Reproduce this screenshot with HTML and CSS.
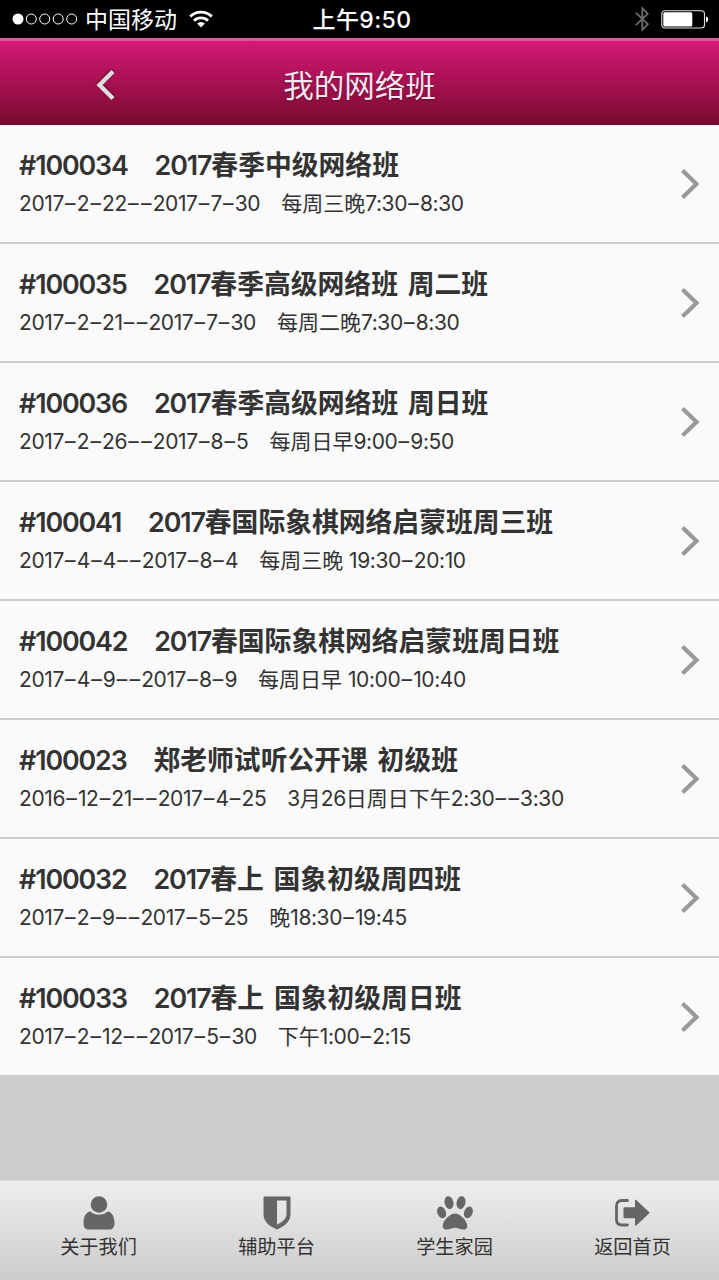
FILE: index.html
```html
<!DOCTYPE html>
<html lang="zh-CN">
<head>
    <meta charset="UTF-8">
    <meta name="viewport" content="width=device-width, initial-scale=1.0">
    <title>我的网络班</title>
    <link rel="stylesheet" href="styles.css">
</head>
<body>

    <div class="status-bar">
        <div class="status-left">
            <svg class="signal" viewBox="0 0 66 12">
                <circle cx="6" cy="6" r="5.5" fill="#fff"/>
                <g fill="none" stroke="#fff" stroke-width="1">
                    <circle cx="19.3" cy="6" r="5"/>
                    <circle cx="32.7" cy="6" r="5"/>
                    <circle cx="46.2" cy="6" r="5"/>
                    <circle cx="59.7" cy="6" r="5"/>
                </g>
            </svg>
            <span class="carrier">中国移动</span>
            <svg class="wifi" viewBox="0 0 24 18">
                <g fill="none" stroke="#fff" stroke-width="2.8">
                    <path d="M1.2 6.6a15.3 15.3 0 0 1 21.6 0"/>
                    <path d="M5 10.8a9.9 9.9 0 0 1 14 0"/>
                </g>
                <path d="M12 17.6l-3.9-4a5.5 5.5 0 0 1 7.8 0z" fill="#fff"/>
            </svg>
        </div>
        <div class="status-time">上午9:50</div>
        <div class="status-right">
            <svg class="bluetooth" viewBox="0 0 14 26"><path d="M.8 6.6l12 11.6-5.5 5.6V2.2l5.5 5.5L.8 19.2" fill="none" stroke="#6b6b6b" stroke-width="1.8"/></svg>
            <svg class="battery" viewBox="0 0 48 19">
                <rect x=".8" y=".8" width="42.7" height="17.2" rx="3" fill="none" stroke="#ddd" stroke-width="1.1"/>
                <rect x="2.3" y="2.3" width="29" height="14.2" rx="1.5" fill="#fff"/>
                <path d="M45 6.3q2.3 1 2.3 3.1t-2.3 3.1z" fill="#fff"/>
            </svg>
        </div>
    </div>

    <header class="page-header">
        <svg class="back" viewBox="0 0 20 32"><path d="M17 2.5L3.5 16 17 29.5"/></svg>
        <h1>我的网络班</h1>
    </header>

    <ul class="class-list" id="classList"></ul>

    <nav class="tab-bar">
        <a class="tab">
            <svg viewBox="0 0 36 34">
                <circle cx="18" cy="8.5" r="8.3"/>
                <path d="M9.5 15.5a12.5 12.5 0 0 0 17 0c4.500.5 7 5 7 11.5 0 4-1.5 6.500-5 6.500h-21c-3.500 0-5-2.500-5-6.500 0-6.500 2.500-11 7-11.500z"/>
            </svg>
            <span>关于我们</span>
        </a>
        <a class="tab">
            <svg viewBox="0 0 36 34">
                <path fill-rule="evenodd" d="M5.500.5h25q1 0 1 1V18c0 7-5 12-13.500 15.500C9.500 30 4.500 25 4.500 18V1.500q0-1 1-1zM18 4.500v24.300c6-3.200 9.500-6 9.500-10.800V4.500z"/>
            </svg>
            <span>辅助平台</span>
        </a>
        <a class="tab">
            <svg viewBox="0 0 36 34">
                <ellipse cx="12" cy="6.7" rx="4.4" ry="6.5" transform="rotate(-12 12 6.7)"/>
                <ellipse cx="24" cy="6.7" rx="4.4" ry="6.5" transform="rotate(12 24 6.7)"/>
                <ellipse cx="4.6" cy="16.4" rx="4.2" ry="6" transform="rotate(-22 4.6 16.4)"/>
                <ellipse cx="31.4" cy="16.4" rx="4.2" ry="6" transform="rotate(22 31.4 16.4)"/>
                <path d="M18 17.5c5.500 0 12.300 7.500 12.300 12.500 0 2.500-1.500 3.600-4 3.600-3.300 0-5-1.900-8.300-1.900s-5 1.900-8.300 1.900c-2.500 0-4-1.100-4-3.600 0-5 6.800-12.500 12.300-12.500z"/>
            </svg>
            <span>学生家园</span>
        </a>
        <a class="tab">
            <svg viewBox="0 0 36 34">
                <path d="M12.500 4.500H7q-5.500 0-5.500 5.500v13.500q0 5.500 5.500 5.500h5.500" fill="none" stroke="#666" stroke-width="2.8" stroke-linecap="round"/>
                <path d="M9.500 11.200h10.500V5q0-2 1.500-.8L34 16q.8.8 0 1.600L21.500 29.300q-1.500 1.200-1.500-.8v-6.200H9.500q-1 0-1-1v-9.100q0-1 1-1z"/>
            </svg>
            <span>返回首页</span>
        </a>
    </nav>

    <script src="app.js"></script>
</body>
</html>
```
FILE: app.js
```js
const classes = [
    { title: '#100034　2017春季中级网络班', time: '2017–2–22––2017–7–30　每周三晚7:30–8:30' },
    { title: '#100035　2017春季高级网络班 周二班', time: '2017–2–21––2017–7–30　每周二晚7:30–8:30' },
    { title: '#100036　2017春季高级网络班 周日班', time: '2017–2–26––2017–8–5　每周日早9:00–9:50' },
    { title: '#100041　2017春国际象棋网络启蒙班周三班', time: '2017–4–4––2017–8–4　每周三晚 19:30–20:10' },
    { title: '#100042　2017春国际象棋网络启蒙班周日班', time: '2017–4–9––2017–8–9　每周日早 10:00–10:40' },
    { title: '#100023　郑老师试听公开课 初级班', time: '2016–12–21––2017–4–25　3月26日周日下午2:30––3:30' },
    { title: '#100032　2017春上 国象初级周四班', time: '2017–2–9––2017–5–25　晚18:30–19:45' },
    { title: '#100033　2017春上 国象初级周日班', time: '2017–2–12––2017–5–30　下午1:00–2:15' }
];

// Digits are set tighter than the Chinese text, dashes looser
function markUp(text) {
    return text
        .replace(/[#\d:]+/g, '<span class="num">$&</span>')
        .replace(/–/g, '<span class="dash">–</span>');
}

document.getElementById('classList').innerHTML = classes.map(item => `
    <li>
        <div class="info">
            <h2>${markUp(item.title)}</h2>
            <p>${markUp(item.time)}</p>
        </div>
        <svg class="arrow" viewBox="0 0 20 32"><path d="M2.5 2.5L16.5 16l-14 13.5"/></svg>
    </li>`).join('');
```
FILE: styles.css
```css
* {
    box-sizing: border-box;
}

body, html {
    margin: 0;
    padding: 0;
    height: 100%;
}

body {
    display: flex;
    flex-direction: column;
    font-family: Inter, "Noto Sans CJK SC", sans-serif;
    background-color: #ccc;
    color: #333;
    overflow: hidden;
}

/* Phone status bar */
.status-bar {
    display: grid;
    grid-template-columns: 1fr auto 1fr;
    align-items: center;
    height: 38px;
    padding: 0 10px 0 12px;
    background: #000;
    color: #fff;
    font-size: 23px;
    line-height: 36px;
}

.status-left, .status-right {
    display: flex;
    align-items: center;
}

.status-right {
    justify-content: flex-end;
    gap: 12px;
}

.status-time {
    padding: 1px 0 0 3px;
    font-weight: 500;
    letter-spacing: 0.4px;
}

.signal {
    width: 66px;
    height: 12px;
}

.carrier {
    margin: 1px 12px 0 7px;
}

.wifi {
    width: 24px;
    height: 18px;
}

.bluetooth {
    width: 14px;
    height: 26px;
}

.battery {
    width: 48px;
    height: 19px;
}

/* Title bar */
.page-header {
    display: grid;
    grid-template-columns: 96px 24px 1fr 120px;
    align-items: center;
    height: 87px;
    padding-top: 3px;
    border-top: 3px solid #e0559b;
    background: linear-gradient(#d61878, #770a2c);
    color: #fbe6f0;
}

.page-header h1 {
    margin: 0;
    padding-top: 2px;
    font-size: 30.5px;
    font-weight: 400;
    line-height: 1.5;
    text-align: center;
    text-shadow: 0 1px 2px rgba(0, 0, 0, 0.4);
}

.back {
    grid-column: 2;
    width: 20px;
    height: 32px;
    fill: none;
    stroke: #ddd;
    stroke-width: 4.4;
    filter: drop-shadow(0 -1px 1px rgba(0, 0, 0, 0.5));
}

/* Class list */
.class-list {
    margin: 0;
    padding: 0;
    list-style: none;
}

.class-list li {
    display: flex;
    align-items: center;
    justify-content: space-between;
    height: 119px;
    padding: 0 19px;
    background: #fafafa;
    border-bottom: 2px solid #ccc;
}

.class-list li:last-child {
    height: 117px;
    border-bottom: none;
}

.info {
    white-space: nowrap;
}

.info h2 {
    margin: 0 0 2px;
    font-size: 26.8px;
    font-weight: 600;
    line-height: 38px;
    word-spacing: 3px;
}

.info h2 .num {
    letter-spacing: -1.1px;
}

.info p {
    margin: 0;
    font-size: 21px;
    line-height: 36px;
}

.info p .num {
    letter-spacing: -0.4px;
}

.dash {
    margin: 0 1.2px;
}

.arrow {
    width: 20px;
    height: 32px;
    fill: none;
    stroke: #999;
    stroke-width: 4.2;
}

/* Bottom tabs */
.tab-bar {
    display: grid;
    grid-template-columns: repeat(4, 178px);
    height: 100px;
    margin-top: auto;
    padding-left: 9.5px;
    border-top: 1px solid #ddd;
    background: linear-gradient(#eee, #ccc);
}

.tab {
    display: flex;
    flex-direction: column;
    align-items: center;
    padding-top: 15px;
    font-size: 19.2px;
    line-height: 34px;
}

.tab svg {
    width: 36px;
    height: 34px;
    fill: #666;
}
```
